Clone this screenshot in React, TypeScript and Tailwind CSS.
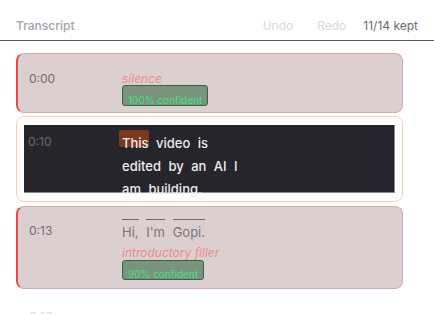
import React from "react";

function Words({ words, className }: { words: string[]; className?: string }) {
  return (
    <>
      {words.map((w, i) => (
        <React.Fragment key={i}>
          <span className={className}>{w}</span>{" "}
        </React.Fragment>
      ))}
    </>
  );
}

export default function App() {
  return (
    <div className="w-[434px] h-[314px] overflow-hidden bg-white font-['Inter','Liberation_Sans',sans-serif]">
      <div className="flex items-center border-b border-[#5c5c5c] px-4 pt-[18px] pb-[6px] text-[12px] leading-4">
        <span className="font-medium text-[#a3a3aa]">Transcript</span>
        <span className="ml-auto text-[#d9d9dd]">Undo</span>
        <span className="ml-6 text-[#d9d9dd]">Redo</span>
        <span className="ml-[17px] text-[#6a6a72]">11/14 kept</span>
      </div>

      <div className="flex flex-col pl-4 pr-[31px] pt-3">
        {/* Card 1 */}
        <div className="flex h-[60px] items-start rounded-lg border border-[#d3abac] border-l-2 border-l-[#e5484d] bg-[#dbcfd0] pl-[11px] pt-[19px]">
          <div className="w-[93px] text-[12px] leading-[12px] text-[#6e6e78]">0:00</div>
          <div className="flex flex-col items-start">
            <div className="text-[12px] italic leading-none text-[#f28a8c]">silence</div>
            <div className="h-[21px] overflow-hidden rounded-[3px] border border-[#2d6a3e] bg-[#7a937f] pl-[5px] pr-[5px] pt-[9px] text-[10px] leading-none whitespace-nowrap text-[#4ade80]">
              100% confident
            </div>
          </div>
        </div>

        {/* Card 2 (selected) */}
        <div className="mt-[3px] rounded-lg border border-[#fbcfb7] bg-white px-[7px] pt-[8px] pb-[8px]">
          <div className="flex h-[68px] items-start border-r border-b border-[#8a8a8e] bg-[#25252b] pl-[4px]">
            <div className="w-[94px] pt-[11px] text-[12px] leading-[12px] text-[#6b6b72]">0:10</div>
            <div className="w-[130px] pt-[7px] text-[13px] font-medium leading-[23px] text-[#ececef]">
              <span className="relative mr-1">
                <span className="absolute left-[-3px] top-[-5px] h-[17px] w-[30px] rounded-[2px] bg-[#7a391d]" />
                <span className="relative">This</span>
              </span>{" "}
              <Words words={["video", "is", "edited", "by", "an", "AI", "I", "am", "building."]} className="mr-1" />
            </div>
          </div>
        </div>

        {/* Card 3 */}
        <div className="mt-[4px] flex h-[83px] items-start rounded-lg border border-[#d3abac] border-l-2 border-l-[#e5484d] bg-[#dbcfd0] pl-[11px] pt-[12px]">
          <div className="w-[93px] pt-[6px] text-[12px] leading-[12px] text-[#6e6e78]">0:13</div>
          <div className="flex flex-col items-start">
            <div className="text-[13px] leading-[25px] text-[#777780]">
              <Words words={["Hi,", "I'm", "Gopi."]} className="mr-1 inline-block border-t border-[#6b6b6b]" />
            </div>
            <div className="mt-[2px] text-[12px] italic leading-none text-[#f28a8c]">introductory filler</div>
            <div className="mt-px h-[20px] overflow-hidden rounded-[3px] border border-[#2d6a3e] bg-[#7a937f] pl-[5px] pr-[5px] pt-[8px] text-[10px] leading-none whitespace-nowrap text-[#4ade80]">
              90% confident
            </div>
          </div>
        </div>

        {/* Faint next row */}
        <div className="mt-[4px] pl-[13px] pt-[18px] text-[12px] leading-[12px] text-[#dcdce0]">0:16</div>
      </div>
    </div>
  );
}
